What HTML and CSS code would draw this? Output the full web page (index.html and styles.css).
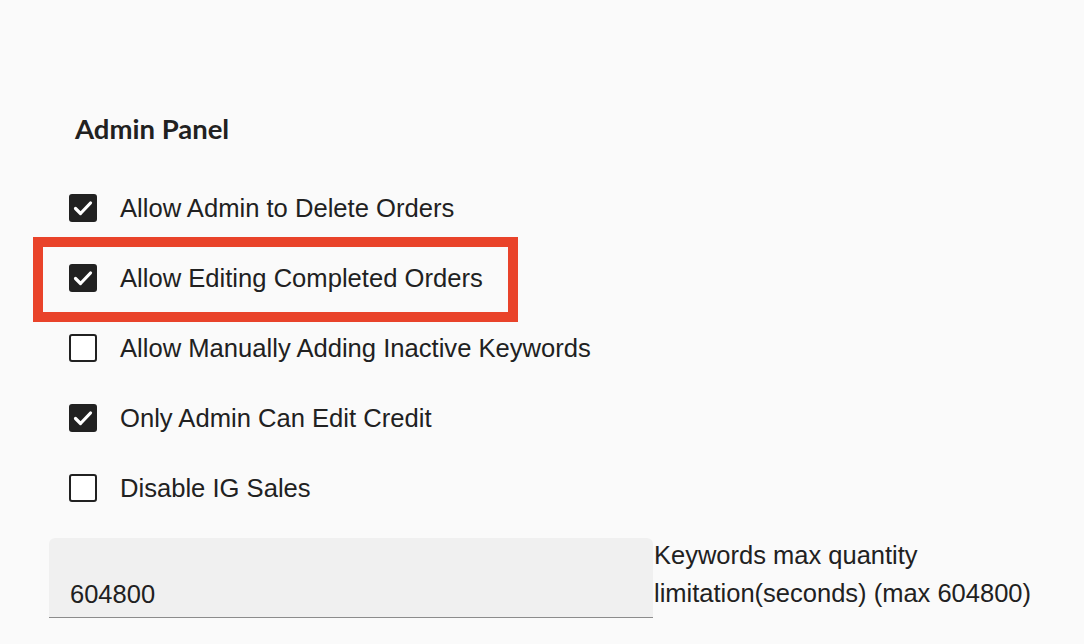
FILE: index.html
```html
<!DOCTYPE html>
<html lang="en">
<head>
<meta charset="utf-8">
<title>Admin Panel</title>
<link rel="stylesheet" href="styles.css">
</head>
<body>
<main class="page">
  <h2 class="title">Admin Panel</h2>
  <ul class="options">
    <li class="option">
      <span class="box checked"><svg viewBox="0 0 28 28"><polyline points="6.5,14.5 11.5,19.5 21.5,9"/></svg></span>
      <span class="label">Allow Admin to Delete Orders</span>
    </li>
    <li class="option highlighted">
      <span class="box checked"><svg viewBox="0 0 28 28"><polyline points="6.5,14.5 11.5,19.5 21.5,9"/></svg></span>
      <span class="label">Allow Editing Completed Orders</span>
    </li>
    <li class="option">
      <span class="box"></span>
      <span class="label">Allow Manually Adding Inactive Keywords</span>
    </li>
    <li class="option">
      <span class="box checked"><svg viewBox="0 0 28 28"><polyline points="6.5,14.5 11.5,19.5 21.5,9"/></svg></span>
      <span class="label">Only Admin Can Edit Credit</span>
    </li>
    <li class="option">
      <span class="box"></span>
      <span class="label">Disable IG Sales</span>
    </li>
  </ul>
  <div class="field-row">
    <div class="field"><span class="value">604800</span></div>
    <div class="field-label">Keywords max quantity<br>limitation(seconds) (max 604800)</div>
  </div>
</main>
</body>
</html>
```
FILE: styles.css
```css
html, body {
  margin: 0;
  padding: 0;
  background: #fafafa;
}
body {
  font-family: "Liberation Sans", Arial, sans-serif;
  color: #212121;
  width: 1084px;
  height: 644px;
  overflow: hidden;
}
.page {
  padding-top: 113px;
}
.title {
  margin: 0 0 0 75px;
  font-family: Lato, "Liberation Sans", sans-serif;
  font-weight: 700;
  font-size: 27.5px;
  line-height: 32px;
  color: #212121;
}
.options {
  list-style: none;
  margin: 28px 0 0 0;
  padding: 0 0 0 69px;
}
.option {
  height: 70px;
  display: flex;
  align-items: center;
  gap: 23px;
  font-size: 25.6px;
  position: relative;
}
.option.highlighted::after {
  content: "";
  position: absolute;
  left: -36px;
  top: -6px;
  width: 465px;
  height: 65px;
  border: 10px solid #e9432a;
  pointer-events: none;
}
.box {
  width: 28px;
  height: 28px;
  box-sizing: border-box;
  border: 2.5px solid #212121;
  border-radius: 3px;
  background: #ffffff;
  flex: none;
  display: flex;
  align-items: center;
  justify-content: center;
}
.box.checked {
  background: #212121;
  border: none;
}
.box svg {
  width: 28px;
  height: 28px;
}
.box polyline {
  fill: none;
  stroke: #ffffff;
  stroke-width: 3.2;
  stroke-linecap: round;
  stroke-linejoin: round;
}
.label {
  line-height: 30px;
}
.field-row {
  display: flex;
  align-items: flex-start;
  margin: 15px 0 0 49px;
}
.field {
  width: 604px;
  height: 80px;
  box-sizing: border-box;
  background: #f0f0f0;
  border-radius: 6px 6px 0 0;
  border-bottom: 1.5px solid #8c8c8c;
  padding: 41px 0 0 21px;
  flex: none;
}
.value {
  font-size: 25.5px;
  line-height: 30px;
  color: #212121;
}
.field-label {
  margin-top: -2px;
  margin-left: 1px;
  font-size: 25.5px;
  line-height: 38px;
  color: #212121;
}
```
